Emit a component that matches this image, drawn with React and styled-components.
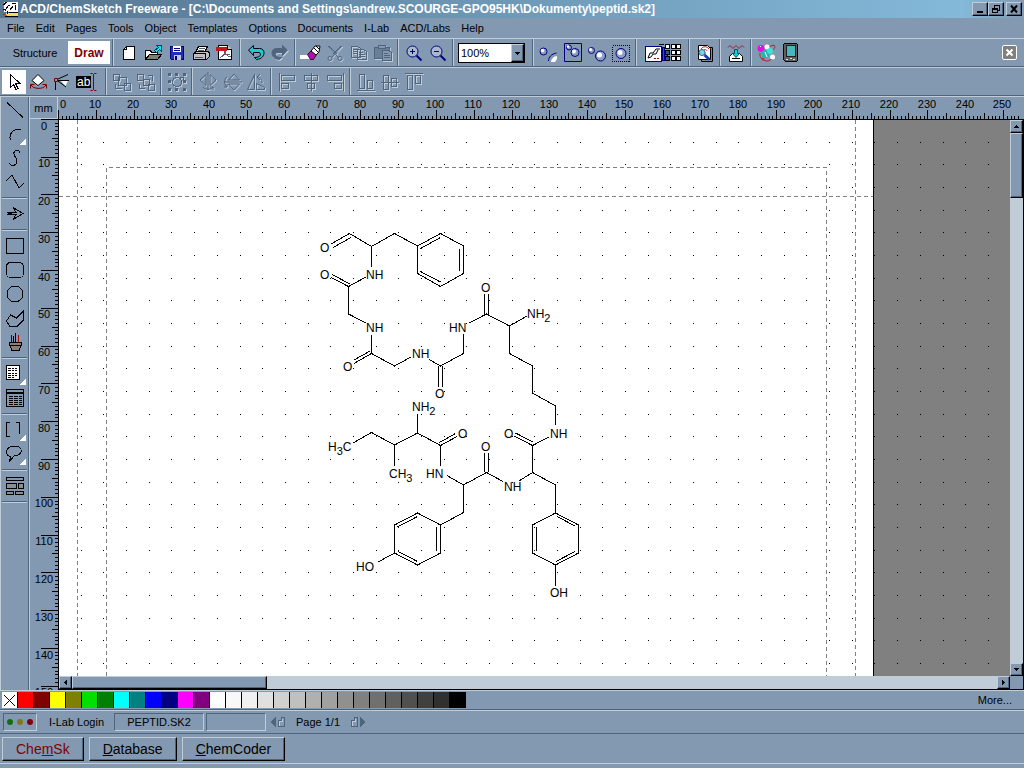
import React, { useEffect, useState } from "react";
import styled, { createGlobalStyle, css } from "styled-components";

const FACE = "#8399b1";
const LIGHT = "#c1ccd9";
const DARK = "#4f657d";
const NAVY = "#000080";

const GlobalStyle = createGlobalStyle`
  * {
    box-sizing: border-box;
  }
  body {
    margin: 0;
    background: ${FACE};
    color: #000;
    font-family: "Liberation Sans", Arial, sans-serif;
    font-size: 11px;
  }
  button, select {
    font: inherit;
    color: inherit;
    margin: 0;
    padding: 0;
    border: 0;
    background: none;
    border-radius: 0;
  }
`;

const raised = css`
  background: ${FACE};
  border: 1px solid #000;
  border-top-color: ${LIGHT};
  border-left-color: ${LIGHT};
  box-shadow: inset -1px -1px 0 ${DARK};
`;

const sunken = css`
  border: 1px solid ${LIGHT};
  border-top-color: ${DARK};
  border-left-color: ${DARK};
`;

const Window = styled.div`
  display: flex;
  flex-direction: column;
  height: 100vh;
  overflow: hidden;
`;

const TitleBar = styled.header`
  display: flex;
  align-items: center;
  height: 18px;
  flex: none;
  padding: 0 2px;
  gap: 2px;
  background: linear-gradient(to right, #557590, #84b9d9 94%, ${FACE});
`;

const Title = styled.h1`
  flex: 1;
  margin: 0;
  font-size: 12px;
  line-height: 18px;
  color: #fff;
  white-space: nowrap;
  overflow: hidden;
`;

const WindowButtons = styled.div`
  display: flex;
`;

const WindowButton = styled.button`
  ${raised}
  display: flex;
  width: 16px;
  height: 14px;
`;

const MenuBar = styled.nav`
  display: flex;
  align-items: center;
  gap: 11px;
  height: 20px;
  flex: none;
  padding: 0 7px;
`;

const MenuItem = styled.button`
  line-height: 18px;
`;

const ToolBar = styled.div`
  display: flex;
  align-items: center;
  height: 29px;
  flex: none;
  padding: 0 7px 0 2px;
  border-top: 1px solid ${LIGHT};
  border-bottom: 1px solid ${DARK};
`;

const ModeButton = styled.button`
  width: ${(p) => (p.$active ? 42 : 66)}px;
  height: 23px;
  font-weight: ${(p) => (p.$active ? "bold" : "normal")};
  font-size: ${(p) => (p.$active ? 12 : 11)}px;
  color: ${(p) => (p.$active ? "#800000" : "#000")};
  background: ${(p) => (p.$active ? "#fff" : "none")};
`;

const IconButton = styled.button`
  display: flex;
  justify-content: center;
  align-items: center;
  flex: none;
  width: ${(p) => p.$width || 24}px;
  height: 24px;
  background: ${(p) => (p.$active ? "#fff" : "none")};
  &:disabled svg {
    filter: drop-shadow(1px 1px 0 ${LIGHT});
  }
`;

const Separator = styled.span`
  flex: none;
  width: 2px;
  height: 27px;
  margin: 0 3px 0 ${(p) => (p.$wide ? 7 : 2)}px;
  background: ${LIGHT};
  border-left: 1px solid ${DARK};
`;

const Combo = styled.label`
  display: flex;
  width: 67px;
  height: 20px;
  margin: 0 5px 0 1px;
  background: #fff;
  border: 1px solid #000;
`;

const ComboSelect = styled.select`
  flex: 1;
  min-width: 0;
  padding-left: 2px;
  appearance: none;
`;

const ComboArrow = styled.span`
  ${raised}
  display: flex;
  width: 13px;
`;

const CloseDocument = styled.button`
  display: flex;
  width: 15px;
  height: 15px;
  margin-left: auto;
  background: #808080;
  border: 1px solid #fff;
  border-radius: 2px;
`;

const Workspace = styled.main`
  display: flex;
  flex: 1;
  min-height: 0;
  border-top: 1px solid ${LIGHT};
`;

const ToolBox = styled.div`
  display: flex;
  flex-direction: column;
  align-items: center;
  flex: none;
  width: 29px;
  padding-top: 1px;
  border-left: 1px solid ${LIGHT};
  border-right: 1px solid ${DARK};
  overflow: hidden;
`;

const ToolBoxRule = styled.span`
  flex: none;
  width: 25px;
  height: 2px;
  margin: 3px 0;
  background: ${LIGHT};
  border-top: 1px solid ${DARK};
`;

const Sheet = styled.div`
  display: grid;
  flex: 1;
  min-width: 0;
  grid-template-columns: 28px 1fr;
  grid-template-rows: 22px 1fr;
  border-left: 1px solid ${LIGHT};
`;

const Units = styled.div`
  display: flex;
  align-items: center;
  justify-content: center;
  border-right: 1px solid ${LIGHT};
  border-bottom: 1px solid ${LIGHT};
`;

const Ruler = styled.svg`
  display: block;
  width: 100%;
  height: 100%;
  overflow: hidden;
  text-anchor: middle;
`;

const RulerCell = styled.div`
  min-width: 0;
  min-height: 0;
  overflow: hidden;
`;

const View = styled.div`
  display: grid;
  grid-template-columns: 1fr 13px;
  grid-template-rows: 1fr 13px;
  min-width: 0;
  min-height: 0;
  border: 1px solid #000;
`;

const Drawing = styled.svg`
  display: block;
  width: 100%;
  height: 100%;
  background: #808080;
  font-size: 12px;
`;

const DrawingCell = styled.div`
  min-width: 0;
  min-height: 0;
  overflow: hidden;
`;

const ScrollBar = styled.div`
  display: flex;
  flex-direction: ${(p) => (p.$vertical ? "column" : "row")};
  background: ${LIGHT};
`;

const ScrollButton = styled.button`
  ${raised}
  display: flex;
  flex: none;
  width: 13px;
  height: 13px;
`;

const ScrollThumb = styled.div`
  ${raised}
  flex: none;
  width: ${(p) => p.$width || 13}px;
  height: ${(p) => p.$height || 13}px;
`;

const ScrollSpace = styled.div`
  flex: 1;
`;

const ScrollCorner = styled.div`
  background: ${FACE};
`;

const Palette = styled.div`
  display: flex;
  align-items: center;
  height: 20px;
  flex: none;
  padding: 0 12px 0 2px;
  border-top: 1px solid ${LIGHT};
  border-bottom: 1px solid ${DARK};
`;

const Swatch = styled.button`
  display: flex;
  width: 16px;
  height: 16px;
  background: ${(p) => p.$color};
  border-right: 1px solid #000;
`;

const MoreButton = styled.button`
  margin-left: auto;
`;

const StatusBar = styled.div`
  display: flex;
  align-items: center;
  height: 24px;
  flex: none;
  padding: 0 3px;
  border-top: 1px solid ${LIGHT};
  border-bottom: 1px solid ${DARK};
`;

const StatusPanel = styled.div`
  ${sunken}
  display: flex;
  align-items: center;
  justify-content: center;
  gap: 4px;
  width: ${(p) => p.$width}px;
  height: 18px;
  margin-right: 2px;
`;

const Lamp = styled.span`
  width: 6px;
  height: 6px;
  border-radius: 50%;
  background: ${(p) => p.$color};
`;

const StatusButton = styled.button`
  width: 75px;
`;

const PageLabel = styled.span`
  width: 60px;
  text-align: center;
`;

const TabBar = styled.div`
  display: flex;
  align-items: center;
  gap: 5px;
  height: 29px;
  flex: none;
  padding: 0 2px;
`;

const Tab = styled.button`
  ${raised}
  height: 24px;
  padding: 0 13px;
  font-size: 14px;
  line-height: 20px;
  color: ${(p) => (p.$active ? "#800000" : "#000")};
`;

const Footer = styled.footer`
  flex: none;
  height: 5px;
  border-top: 1px solid ${LIGHT};
`;

const MENU = [
  "File", "Edit", "Pages", "Tools", "Object", "Templates",
  "Options", "Documents", "I-Lab", "ACD/Labs", "Help",
];

const COLORS = [
  "#ff0000", "#800000", "#ffff00", "#808000", "#00e000", "#008000", "#00ffff",
  "#008080", "#0000ff", "#000080", "#ff00ff", "#800080", "#ffffff", "#f8f8f8",
  "#f0f0f0", "#e0e0e0", "#d0d0d0", "#c0c0c0", "#b0b0b0", "#a0a0a0", "#909090",
  "#808080", "#707070", "#606060", "#505050", "#404040", "#303030", "#000000",
];

const Icon = ({ width = 24, height = 24, smooth, children }) => (
  <svg
    width={width}
    height={height}
    viewBox={`0 0 ${width} ${height}`}
    fill="none"
    stroke="#000"
    shapeRendering={smooth ? "auto" : "crispEdges"}
    aria-hidden="true"
  >
    {children}
  </svg>
);

const Ball = ({ x, y, r }) => (
  <g>
    <circle cx={x} cy={y} r={r} fill="#8f9fc4" stroke={NAVY} />
    <circle cx={x - 1} cy={y - 1} r={r / 2} fill="#fff" stroke="none" />
  </g>
);

/* main toolbar */

const NewIcon = () => (
  <Icon>
    <path d="M9.500 5.500h8v13h-11v-10z" fill="#fff" />
    <path d="M9.500 5.500v3h-3" />
  </Icon>
);

const OpenIcon = () => (
  <Icon>
    <path d="M4.500 18.500v-9h5l1 2h6v3" fill="#fff" />
    <path d="M4.500 18.500l4-5h12l-4 5z" fill="#808070" />
    <path d="M13.500 9.500l4-3-2-2h5v6l-2-2-3 3z" fill="#00e8e8" stroke="#004060" />
  </Icon>
);

const SaveIcon = () => (
  <Icon>
    <path d="M5.500 5.500h13v13h-12l-1-1z" fill="#2030b0" stroke={NAVY} />
    <path d="M8 5h8v6H8z" fill="#fff" stroke="none" />
    <path d="M9 7.500h6M9 9.500h6" stroke={NAVY} />
    <path d="M9 14h7v5H9z" fill="#c0c8d8" stroke="none" />
    <path d="M10 15h2v4h-2z" fill={NAVY} stroke="none" />
  </Icon>
);

const PrintIcon = () => (
  <Icon>
    <path d="M9.500 5.500h9l-3 6h-9z" fill="#fff" />
    <path d="M10 7.500h6M9 9.500h6" stroke="#606060" />
    <path d="M4.500 12.500l3-2h11l2 1v4l-3 3h-13z" fill="#c0c0c0" />
    <path d="M4.500 12.500h12v6" />
    <path d="M6 16.500h8" stroke="#d02020" />
  </Icon>
);

const PdfIcon = () => (
  <Icon>
    <path d="M5.500 4.500h9l4 4v10h-13z" fill="#fff" />
    <path d="M14.500 4.500v4h4" fill="#c0c0c0" />
    <path d="M3 6h11v4H3z" fill="#c01818" stroke="none" />
    <path d="M12 10c0 3-2 5-5 7M12 10c0 3 2 5 6 6M9 15c3-2 5-2 8-1" stroke="#606060" />
  </Icon>
);

const UndoIcon = ({ flip, fill, stroke = "#000" }) => (
  <Icon smooth>
    <path
      transform={flip ? "translate(24 0) scale(-1 1)" : undefined}
      d="M4.500 9l5-4.500v3h6c3 0 4.500 2 4.500 4.500s-2 6-7.500 6.500l-2-2c4 0 6-1.500 6-3s-1-2-2.500-2H9.500v3z"
      fill={fill}
      stroke={stroke}
    />
  </Icon>
);

const EraserIcon = () => (
  <Icon smooth>
    <path d="M1 14h9l4 4H1z" fill="#fff" stroke="none" />
    <path d="M8.500 13.500l4-4 5 4-3 5h-3z" fill="#b010b0" stroke="#400040" />
    <path d="M12 10l4-5h5l-1 6-3 3z" fill="#fff" stroke="#000" />
    <path d="M15 7l4 4M17 5l3 3" stroke="#000" />
  </Icon>
);

const CutIcon = () => (
  <Icon smooth>
    <path d="M5 5l10 11M19 5L9 16M6 5l8 8M18 5l-8 8" stroke={DARK} />
    <circle cx="7" cy="17.500" r="2" stroke={DARK} />
    <circle cx="17" cy="17.500" r="2" stroke={DARK} />
  </Icon>
);

const CopyIcon = () => (
  <Icon>
    <path d="M4.500 5.500h6l3 2v9h-9zM10.500 8.500h6l3 2v8h-9zM6 8.500h4M6 10.500h4M6 12.500h4M12 11.500h4M12 13.500h6M12 15.500h6" stroke={DARK} />
  </Icon>
);

const PasteIcon = () => (
  <Icon>
    <path d="M3.500 6.500h15v11h-15z" fill="#6a7f96" stroke={DARK} />
    <path d="M7.500 4.500h7v3h-7zM11.500 9.500h6l3 2v8h-9z" fill={FACE} stroke={DARK} />
    <path d="M13 12.500h4M13 14.500h6M13 16.500h6" stroke={DARK} />
  </Icon>
);

const ZoomIcon = ({ plus }) => (
  <Icon smooth>
    <circle cx="10.500" cy="10.500" r="5.500" fill="#a9b8cf" stroke={NAVY} />
    <path d="M8 10.500h5" stroke={NAVY} />
    {plus && <path d="M10.500 8v5" stroke={NAVY} />}
    <path d="M14.500 14.500l5 5" stroke={NAVY} strokeWidth="2" />
  </Icon>
);

const BallArcIcon = () => (
  <Icon smooth>
    <Ball x={6.500} y={10.500} r={3.500} />
    <path d="M11.500 20c0-4 3-7 8-8" stroke={NAVY} />
    <path d="M14 21c0-3 3-6 6-6v3l-2 3z" fill="#fff" stroke="none" />
  </Icon>
);

const BallBoxIcon = () => (
  <Icon smooth>
    <path d="M3.500 2.500h17v18h-17z" stroke={NAVY} />
    <Ball x={8} y={6.500} r={2.500} />
    <Ball x={14} y={11.500} r={4} />
  </Icon>
);

const BallPairIcon = () => (
  <Icon smooth>
    <Ball x={6.500} y={9.500} r={3} />
    <Ball x={15.500} y={15} r={5} />
  </Icon>
);

const BallSelectIcon = () => (
  <Icon>
    <path d="M3.500 4.500h17v16h-17z" strokeDasharray="1 1" />
    <g shapeRendering="auto">
      <Ball x={12} y={12.500} r={5} />
    </g>
  </Icon>
);

const SpectrumIcon = () => (
  <Icon width={38}>
    <path d="M15 3.500h5" />
    <path d="M1.500 5.500h16v15h-16z" fill="#fff" stroke={NAVY} />
    <path d="M4 17l2-5h3l3-4h4M4 17l3-1 2-3h3l2-4" shapeRendering="auto" />
    <path d="M10 17.500h2M13 17.500h2" stroke="#a00000" />
    <path d="M18 6.500h2v13h-2zM20 9.500h3v8h-3z" fill="#3050b0" stroke={NAVY} />
    {[3, 9, 15].map((y) =>
      [21, 27, 32].map((x) => (
        <path key={`${x}-${y}`} d={`M${x + 0.5} ${y + 0.5}h4v4h-4z`} fill={x > 21 || y === 3 ? "#fff" : "#3050b0"} />
      ))
    )}
  </Icon>
);

const FindIcon = () => (
  <Icon smooth>
    <path d="M8.500 6.500h11v14h-11z" fill="#8a8a8a" />
    <path d="M5.500 4.500h9l3 3v11h-12z" fill="#fff" />
    <path d="M8 8c2-3 6-3 8 0M10 10c1-2 3-2 4 0M12 11v3" stroke="#c02020" />
    <circle cx="9" cy="11.500" r="3" fill="#70d8e8" stroke="#406080" />
    <path d="M11.500 14l5 4.500" stroke="#1040c0" strokeWidth="3" />
  </Icon>
);

const ImportIcon = () => (
  <Icon smooth>
    <path d="M4 6.500l2-2 3 3 3-3 3 3 3-3 2 2" stroke="#a02020" />
    <path d="M5.500 20.500v-5l3-3h7l3 3v5z" fill="#fff" />
    <path d="M8 17.500h8" />
    <path d="M10.500 8.500h3v4h2l-3.500 4-3.500-4h2z" fill="#00d8d8" stroke="#005060" />
  </Icon>
);

const MoleculeIcon = () => (
  <Icon smooth>
    <path d="M13 6l6-2c2 2 0 4-2 6M5 12c-1 5 3 8 8 8l6-3" stroke="#b02030" />
    <circle cx="6" cy="7.500" r="3.500" fill="#e010e0" stroke="none" />
    <circle cx="12" cy="6" r="2.500" fill="#fff" stroke="none" />
    <circle cx="10.500" cy="13" r="4" fill="#20b8b0" stroke="none" />
    <circle cx="15" cy="10" r="3" fill="#40e0d8" stroke="none" />
    <circle cx="17.500" cy="16" r="2.500" fill="#fff" stroke="none" />
    <circle cx="8" cy="18" r="1.500" fill="#d03030" stroke="none" />
    <path d="M5 6l1-1M10 11l2 5" stroke="#fff" />
  </Icon>
);

const PdaIcon = () => (
  <Icon>
    <path d="M5.500 2.500h12l1 1v16l-1 1h-11l-2-2v-15z" fill="#606060" />
    <path d="M7 4h9v11H7z" fill="#48b8c0" stroke="#202020" />
    <path d="M7 18.500h2M11 17.500h2M14 18.500h2" stroke="#e0e0e0" />
  </Icon>
);

/* editing toolbar */

const PointerIcon = () => (
  <Icon>
    <path d="M8.500 4.500v13l3-3 2.500 5 2-1-2.500-5h4.500z" fill="#fff" />
  </Icon>
);

const RotateIcon = () => (
  <Icon smooth>
    <path d="M12 4.500l6 6-6 5-6-5z" fill="#fff" />
    <path d="M5 15c2 4 12 5 15 0M4.500 18.500v-4h4M20.500 18.500v-4h-4" stroke="#800000" />
  </Icon>
);

const ShearIcon = () => (
  <Icon smooth>
    <path d="M5.500 12v8M8 9l10-4.500M8 10.500h11M8 11l8 6" />
    <path d="M11 11h7l-2.500 5z" fill="#fff" stroke="none" />
    <path d="M4.500 8.500h3v3h-3z" stroke="#800000" />
  </Icon>
);

const TextIcon = () => (
  <svg width="24" height="24" viewBox="0 0 24 24" aria-hidden="true">
    <path d="M2 6h15v12H2z" fill="#000" />
    <text x="3" y="16" fill="#fff" fontSize="12">ab</text>
    <path d="M16.500 3.500h2l1 1 1-1h2M19.500 4.500v15M16.500 20.500h2l1-1 1 1h2" fill="none" stroke="#800000" />
  </svg>
);

const GroupIcon = ({ split }) => (
  <Icon>
    <path
      d={
        split
          ? "M3.500 4.500h6v6h-6zM14.500 14.500h6v6h-6zM9.500 9.500h6v6h-6zM13.500 5.500h5v5M5.500 13.500v5h5"
          : "M3.500 4.500h6v6h-6zM8.500 7.500h8v8h-8zM14.500 13.500h6v7h-6zM5.500 13.500v5h6"
      }
      stroke={DARK}
    />
  </Icon>
);

const SelectAllIcon = () => (
  <Icon>
    <circle cx="12" cy="12" r="4.500" stroke={DARK} />
    <path
      d="M3 3h3v3H3zM10 3h3v3h-3zM18 3h3v3h-3zM3 10h3v3H3zM18 10h3v3h-3zM3 18h3v3H3zM10 18h3v3h-3zM18 18h3v3h-3z"
      fill={DARK}
      stroke="none"
    />
    <path d="M14.500 7.500h4v4" stroke={DARK} />
  </Icon>
);

const FlipIcon = ({ turn = 0 }) => (
  <Icon smooth>
    <g transform={`rotate(${turn} 12 12)`} stroke={DARK}>
      <path d="M10 4.500v11l-6-5.500zM14 4.500v11l6-5.500zM12 2v18M7 17c1 3 9 3 10 0M17 17l-3 0M17 17v3" />
    </g>
  </Icon>
);

const Rotate90Icon = () => (
  <Icon smooth>
    <path d="M10.500 4.500v15h-7zM12.500 19.500h8v-2l-8-4zM13 7c4 0 5 2 5 6M13 7l3-3M13 7l3 3" stroke={DARK} />
  </Icon>
);

const AlignIcon = ({ d }) => (
  <Icon>
    <path d={d} stroke={DARK} />
  </Icon>
);

const ALIGN = [
  ["Align left", "M4.500 3v18M6.500 5.500h13v5h-13zM6.500 13.500h7v5h-7z"],
  ["Align center", "M12.500 3v18M5.500 5.500h13v5h-13zM8.500 13.500h7v5h-7z"],
  ["Align right", "M20.500 3v18M4.500 5.500h14v5h-14zM11.500 13.500h7v5h-7z"],
];

const ALIGN_V = [
  ["Align bottom", "M3 20.500h18M5.500 4.500h5v14h-5zM13.500 10.500h5v8h-5z"],
  ["Align middle", "M3 12.500h18M5.500 5.500h5v14h-5zM13.500 8.500h5v8h-5z"],
  ["Align top", "M3 3.500h18M5.500 5.500h5v14h-5zM13.500 5.500h5v8h-5z"],
];

/* drawing tools, null stands for a dividing rule */

const more = <path d="M18 23h7v-7z" fill="#fff" stroke="none" />;

const TOOLS = [
  ["Line", <path d="M6 4.500l16 15" />],
  ["Arc", <><path d="M9.500 18c-2-6 2-11 10-11" />{more}</>],
  ["Curve", <path d="M19 7c-1-4-7-3-6 1 0 3 4 4 3 8s-6 5-8 1" />],
  ["Polyline", <path d="M5 11l6-6 7 13 5-5" />],
  null,
  ["Arrow", <path d="M6 10.500h9l-3-5 10 6-10 6 3-5H6l3-1z" />],
  null,
  ["Rectangle", <path d="M5.500 4.500h17v15h-17z" />],
  ["Rounded rectangle", <rect x="5.500" y="4.500" width="17" height="15" rx="4" />],
  ["Ellipse", <circle cx="14" cy="12" r="8" />],
  ["Polygon", <path d="M5.500 15l4-6 6 3 7-7v9l-6 6h-8z" />],
  ["Brushes", (
    <>
      <path d="M8.500 12.500h12v3h-1l-1 5h-8l-1-5h-1z" fill="#8c7c74" />
      <path d="M9 15.500h11M14.500 3v9M12.500 6v6" />
      <path d="M10.500 5v7" stroke="#0000c0" />
      <path d="M17.500 5v7" stroke="#c00000" />
    </>
  )],
  null,
  ["Text", (
    <>
      <path d="M5.500 3.500h13v14h-13z" fill="#fff" />
      <path d="M7 6.500h9M7 8.500h9M7 11.500h9M7 13.500h9M7 15.500h7" strokeDasharray="3 1 2 1" />
      {more}
    </>
  )],
  ["Table", (
    <>
      <path d="M5.500 3.500h17v17h-17zM6 6.500h16M6 7.500h16" />
      <path d="M8 10.500h13M8 12.500h13M8 14.500h13M8 16.500h13M8 18.500h13" strokeDasharray="4 1" />
    </>
  )],
  null,
  ["Brackets", <><path d="M9 4.500H5.500v14H9M15 4.500h3.500v11" />{more}</>],
  ["Callout", <><path d="M8 20l2-5c-9-3-4-11 4-11s9 9-1 10z" />{more}</>],
  null,
  ["Template", (
    <>
      <path d="M5.500 3.500h17v3h-17z" />
      <path d="M5.500 9.500h10v5h-10zM17.500 9.500h5v5h-5zM5.500 17.500h7v3h-7zM14.500 17.500h8v3h-8z" fill="#8a8f96" />
    </>
  )],
  null,
];

/* rulers: 96 dpi, so one millimetre is 3.78 px */

const MM = 96 / 25.4;

const range = (count) => Array.from({ length: Math.max(0, Math.floor(count)) }, (_, i) => i);

const useWindowSize = () => {
  const read = () => ({ width: window.innerWidth, height: window.innerHeight });
  const [size, setSize] = useState(read);
  useEffect(() => {
    const update = () => setSize(read());
    window.addEventListener("resize", update);
    return () => window.removeEventListener("resize", update);
  }, []);
  return size;
};

const HorizontalRuler = () => {
  const { width } = useWindowSize();
  const marks = range((width - 58) / MM);
  return (
    <Ruler shapeRendering="crispEdges">
      <path
        stroke="#000"
        d={marks.map((i) => {
          const len = i % 10 === 0 ? 9 : i % 5 === 0 ? 6 : 3;
          return `M${Math.floor(0.6 + i * MM) + 0.5} 22v-${len}`;
        }).join("")}
      />
      {marks.filter((i) => i % 10 === 0 && i * MM < width - 70).map((i) => (
        <text key={i} x={i === 0 ? 5 : Math.floor(i * MM)} y="11">{i}</text>
      ))}
    </Ruler>
  );
};

const VerticalRuler = () => {
  const { height } = useWindowSize();
  const marks = range((height - 197) / MM);
  return (
    <Ruler shapeRendering="crispEdges">
      <path
        stroke="#000"
        d={marks.map((i) => {
          const len = i % 10 === 0 ? 17 : i % 5 === 0 ? 6 : 3;
          return `M28 ${Math.floor(0.3 + i * MM) + 0.5}h-${len}`;
        }).join("")}
      />
      {marks.filter((i) => i % 10 === 0).map((i) => (
        <text key={i} x="14" y={Math.floor(i * MM) + 11}>{i}</text>
      ))}
    </Ruler>
  );
};

/* page */

const STEP = 6 * MM;

const GridDots = () => {
  const dots = [];
  for (let row = 1; row < 50; row++) {
    for (let col = 1; col < 90; col++) {
      dots.push(`M${Math.floor(58.6 + col * STEP)} ${Math.floor(119.4 + row * STEP)}h1v1h-1z`);
    }
  }
  return <path d={dots.join("")} fill="#000" />;
};

const BONDS = [
  // formyl end and phenyl ring
  "M331 244L349.5 233.500M333 247.500L351 237.500M349.500 233.500L371.500 246.500L394.500 233.500L417.500 246",
  "M417.500 246L440.500 233.500L463.500 246V273.500L440.500 286.500L417.500 273.500z",
  "M420.500 248.500L440.500 237.500M459.500 249V271M420.500 271.500L440.500 282",
  "M371.500 246.500V267M366 277L348.500 286.500M332 274.500L350 284M331 277.500L348.500 286.500V314L366 323",
  // glycine chain
  "M371.500 335V353.500L354 363.500M370 351L354 360M371.500 353.500L394.500 366L411 357",
  "M429 359.500L440.500 366L463.500 353.500V334M438.500 366V387M442.500 366V387",
  "M469 323L486.500 314L509.500 326L527 316M484.500 314V294M488.500 314V294",
  // lysine side chain
  "M509.500 326V353.500L532.500 366V393L555.500 406V425M549 437L532.500 445.500",
  "M515.500 433L533 442M514 436L532.500 445.500V472.500L519 481M532.500 472.500L555.500 485V513",
  // right tyrosine ring
  "M555.500 513L578.500 525V553L555.500 565L532.500 553V525z",
  "M557 516.500L575 526M536.500 527V551M575 551.500L556 561.500M555.500 565V586",
  // left tyrosine
  "M503 481.500L486.500 472.500L463.500 485L447 475.500M484.500 472V453M488.500 472V453",
  "M463.500 485V512.500L440.500 525M417.500 513L440.500 525V553L417.500 565L394.500 553V525z",
  "M397.500 527L417.500 516.500M436.500 527V551M398 551.500L417.500 561.500M394.500 553L378 562",
  // isoleucine
  "M440.500 466V445.500L457 436.500M439.500 442.500L455.500 433.500M440.500 445.500L417.500 433V414",
  "M417.500 433L394.500 445L371.500 432.500L353 443M394.500 445V466",
];

const ATOMS = [
  [320, 252, "O"], [320, 279, "O"], [366, 279, "NH"], [366, 332, "NH"],
  [343, 371, "O"], [412, 358, "NH"], [435, 398, "O"], [449, 332, "HN"],
  [481, 292, "O"], [527, 318, "NH", "2"], [550, 438, "NH"], [504, 438, "O"],
  [504, 491, "NH"], [550, 597, "OH"], [481, 451, "O"], [426, 478, "HN"],
  [458, 438, "O"], [412, 411, "NH", "2"], [328, 451, "H", "3", "C"],
  [389, 478, "CH", "3"], [356, 571, "HO"],
];

const Page = () => (
  <Drawing shapeRendering="crispEdges">
    <g transform="translate(-59 -120)">
      <path d="M59 120h814v3000H59z" fill="#fff" />
      <path d="M873.500 120v3000" stroke="#000" />
      <path
        d="M77.500 120v3000M855.500 120v3000M59 196.500h814M106.500 3000V167.500h720V3000"
        fill="none"
        stroke="#808080"
        strokeDasharray="4 3"
      />
      <GridDots />
      <path d={BONDS.join("")} fill="none" stroke="#000" />
      {ATOMS.map(([x, y, name, sub, tail]) => (
        <text key={`${x}-${y}`} x={x} y={y}>
          {name}
          {sub && <tspan dy="4" fontSize="11">{sub}</tspan>}
          {tail && <tspan dy="-4">{tail}</tspan>}
        </text>
      ))}
    </g>
  </Drawing>
);

const ARROWS = {
  up: "M5.500 4l3 3h-6z",
  down: "M2.500 4h6l-3 3z",
  left: "M7 2.500v6l-3-3z",
  right: "M4 2.500v6l3-3z",
};

const Arrow = ({ to }) => (
  <Icon width={11} height={11}>
    <path d={ARROWS[to]} fill="#000" stroke="none" />
  </Icon>
);

const PageIcon = ({ next }) => (
  <Icon width={16} height={14}>
    {next ? (
      <path d="M10.500 2.500v9l4-4.500z" fill={DARK} stroke={DARK} />
    ) : (
      <path d="M5.500 2.500v9l-4-4.500z" fill={DARK} stroke={DARK} />
    )}
    <path
      transform={next ? "translate(-7 0)" : undefined}
      d="M11.500 2.500h3v9h-6v-6h3z"
      fill={FACE}
      stroke={DARK}
    />
    <path
      transform={next ? "translate(-7 0)" : undefined}
      d="M9.500 10.500v-4h3v-3"
      stroke={LIGHT}
    />
  </Icon>
);

const Tool = ({ label, ...props }) => (
  <IconButton type="button" aria-label={label} {...props} />
);

const App = () => {
  return (
    <Window>
      <GlobalStyle />
      <TitleBar>
        <Icon width={16} height={16}>
          <path d="M2 1h14v10H2z" fill="#fff" stroke="none" />
          <path d="M4 12h12v3H5z" fill="#f0e060" stroke="none" />
          <path d="M1.500 4l3-3M3 10l3-5 2-1M10 2.500h4M13.500 4v5M8 8.500l3-3M1 8.500h3M5.500 10v3M3 15.500h13M7 11.500h9" />
          <path d="M1 13.500h2" stroke="#c02020" />
        </Icon>
        <Title>
          {"ACD/ChemSketch Freeware - [C:\\Documents and Settings\\andrew.SCOURGE-GPO95HK\\Dokumenty\\peptid.sk2]"}
        </Title>
        <WindowButtons>
          <WindowButton type="button" aria-label="Minimize">
            <Icon width={14} height={12}><path d="M4 9h6" strokeWidth="2" /></Icon>
          </WindowButton>
          <WindowButton type="button" aria-label="Restore">
            <Icon width={14} height={12}>
              <path d="M5.500 5V2.500h5v5H9M5 2.500h6M3.500 5.500h5v4h-5zM3 6.500h6" />
            </Icon>
          </WindowButton>
        </WindowButtons>
        <WindowButton type="button" aria-label="Close">
          <Icon width={14} height={12} smooth><path d="M4 2.500l6 7M10 2.500l-6 7" strokeWidth="2" /></Icon>
        </WindowButton>
      </TitleBar>

      <MenuBar>
        {MENU.map((name) => (
          <MenuItem key={name} type="button">{name}</MenuItem>
        ))}
      </MenuBar>

      <ToolBar>
        <ModeButton type="button">Structure</ModeButton>
        <ModeButton type="button" $active>Draw</ModeButton>
        <Separator />
        <Tool label="New"><NewIcon /></Tool>
        <Tool label="Open"><OpenIcon /></Tool>
        <Tool label="Save"><SaveIcon /></Tool>
        <Tool label="Print"><PrintIcon /></Tool>
        <Tool label="Export to PDF"><PdfIcon /></Tool>
        <Separator />
        <Tool label="Undo"><UndoIcon fill="#20c8d0" /></Tool>
        <Tool label="Redo" disabled><UndoIcon flip fill={DARK} stroke={DARK} /></Tool>
        <Separator />
        <Tool label="Delete"><EraserIcon /></Tool>
        <Tool label="Cut" disabled><CutIcon /></Tool>
        <Tool label="Copy" disabled><CopyIcon /></Tool>
        <Tool label="Paste" disabled><PasteIcon /></Tool>
        <Separator />
        <Tool label="Zoom in"><ZoomIcon plus /></Tool>
        <Tool label="Zoom out"><ZoomIcon /></Tool>
        <Separator />
        <Combo>
          <ComboSelect aria-label="Zoom" defaultValue="100%">
            <option>100%</option>
          </ComboSelect>
          <ComboArrow>
            <Icon width={11} height={16}>
              <path d="M3 7h5l-2.500 3z" fill="#000" stroke="none" />
            </Icon>
          </ComboArrow>
        </Combo>
        <Separator />
        <Tool label="Ball and arc"><BallArcIcon /></Tool>
        <Tool label="Framed balls"><BallBoxIcon /></Tool>
        <Tool label="Two balls"><BallPairIcon /></Tool>
        <Tool label="Select ball"><BallSelectIcon /></Tool>
        <Separator />
        <Tool label="Spectrum and table" $width={46}><SpectrumIcon /></Tool>
        <Separator />
        <Tool label="Search"><FindIcon /></Tool>
        <Separator />
        <Tool label="Import"><ImportIcon /></Tool>
        <Separator />
        <Tool label="3D viewer"><MoleculeIcon /></Tool>
        <Tool label="Handheld"><PdaIcon /></Tool>
        <CloseDocument type="button" aria-label="Close document">
          <Icon width={13} height={13} smooth>
            <path d="M3.500 3.500l6 6M9.500 3.500l-6 6" stroke="#fff" strokeWidth="2" />
          </Icon>
        </CloseDocument>
      </ToolBar>

      <ToolBar>
        <Tool label="Select" $active><PointerIcon /></Tool>
        <Tool label="Rotate"><RotateIcon /></Tool>
        <Tool label="Edit nodes"><ShearIcon /></Tool>
        <Tool label="Edit text"><TextIcon /></Tool>
        <Separator $wide />
        <Tool label="Group" disabled><GroupIcon /></Tool>
        <Tool label="Ungroup" disabled><GroupIcon split /></Tool>
        <Separator />
        <Tool label="Select all" disabled><SelectAllIcon /></Tool>
        <Separator />
        <Tool label="Flip left to right" disabled><FlipIcon /></Tool>
        <Tool label="Flip top to bottom" disabled><FlipIcon turn={90} /></Tool>
        <Tool label="Rotate 90" disabled><Rotate90Icon /></Tool>
        <Separator />
        {ALIGN.map(([label, d]) => (
          <Tool key={label} label={label} disabled><AlignIcon d={d} /></Tool>
        ))}
        <Separator />
        {ALIGN_V.map(([label, d]) => (
          <Tool key={label} label={label} disabled><AlignIcon d={d} /></Tool>
        ))}
      </ToolBar>

      <Workspace>
        <ToolBox>
          {TOOLS.map((tool, i) =>
            tool ? (
              <Tool key={i} label={tool[0]} $width={27}>
                <Icon width={27} height={24}>{tool[1]}</Icon>
              </Tool>
            ) : (
              <ToolBoxRule key={i} />
            )
          )}
        </ToolBox>
        <Sheet>
          <Units>mm</Units>
          <RulerCell><HorizontalRuler /></RulerCell>
          <RulerCell><VerticalRuler /></RulerCell>
          <View>
            <DrawingCell><Page /></DrawingCell>
            <ScrollBar $vertical>
              <ScrollButton type="button" aria-label="Scroll up"><Arrow to="up" /></ScrollButton>
              <ScrollThumb $height={65} />
              <ScrollSpace />
              <ScrollButton type="button" aria-label="Scroll down"><Arrow to="down" /></ScrollButton>
            </ScrollBar>
            <ScrollBar>
              <ScrollButton type="button" aria-label="Scroll left"><Arrow to="left" /></ScrollButton>
              <ScrollThumb $width={195} />
              <ScrollSpace />
              <ScrollButton type="button" aria-label="Scroll right"><Arrow to="right" /></ScrollButton>
            </ScrollBar>
            <ScrollCorner />
          </View>
        </Sheet>
      </Workspace>

      <Palette>
        <Swatch type="button" aria-label="No color" $color="#fff">
          <Icon width={15} height={16}><path d="M2 3l11 11M13 3L2 14" /></Icon>
        </Swatch>
        {COLORS.map((color) => (
          <Swatch key={color} type="button" aria-label={color} $color={color} />
        ))}
        <MoreButton type="button">More...</MoreButton>
      </Palette>

      <StatusBar>
        <StatusPanel $width={34}>
          <Lamp $color="#107010" />
          <Lamp $color="#807818" />
          <Lamp $color="#800010" />
        </StatusPanel>
        <StatusButton type="button">I-Lab Login</StatusButton>
        <StatusPanel $width={90}>PEPTID.SK2</StatusPanel>
        <StatusPanel $width={60} />
        <Tool label="Previous page" $width={20}><PageIcon /></Tool>
        <PageLabel>Page 1/1</PageLabel>
        <Tool label="Next page" $width={20}><PageIcon next /></Tool>
      </StatusBar>

      <TabBar>
        <Tab type="button" $active>Che<u>m</u>Sk</Tab>
        <Tab type="button"><u>D</u>atabase</Tab>
        <Tab type="button"><u>C</u>hemCoder</Tab>
      </TabBar>
      <Footer />
    </Window>
  );
};

export default App;
